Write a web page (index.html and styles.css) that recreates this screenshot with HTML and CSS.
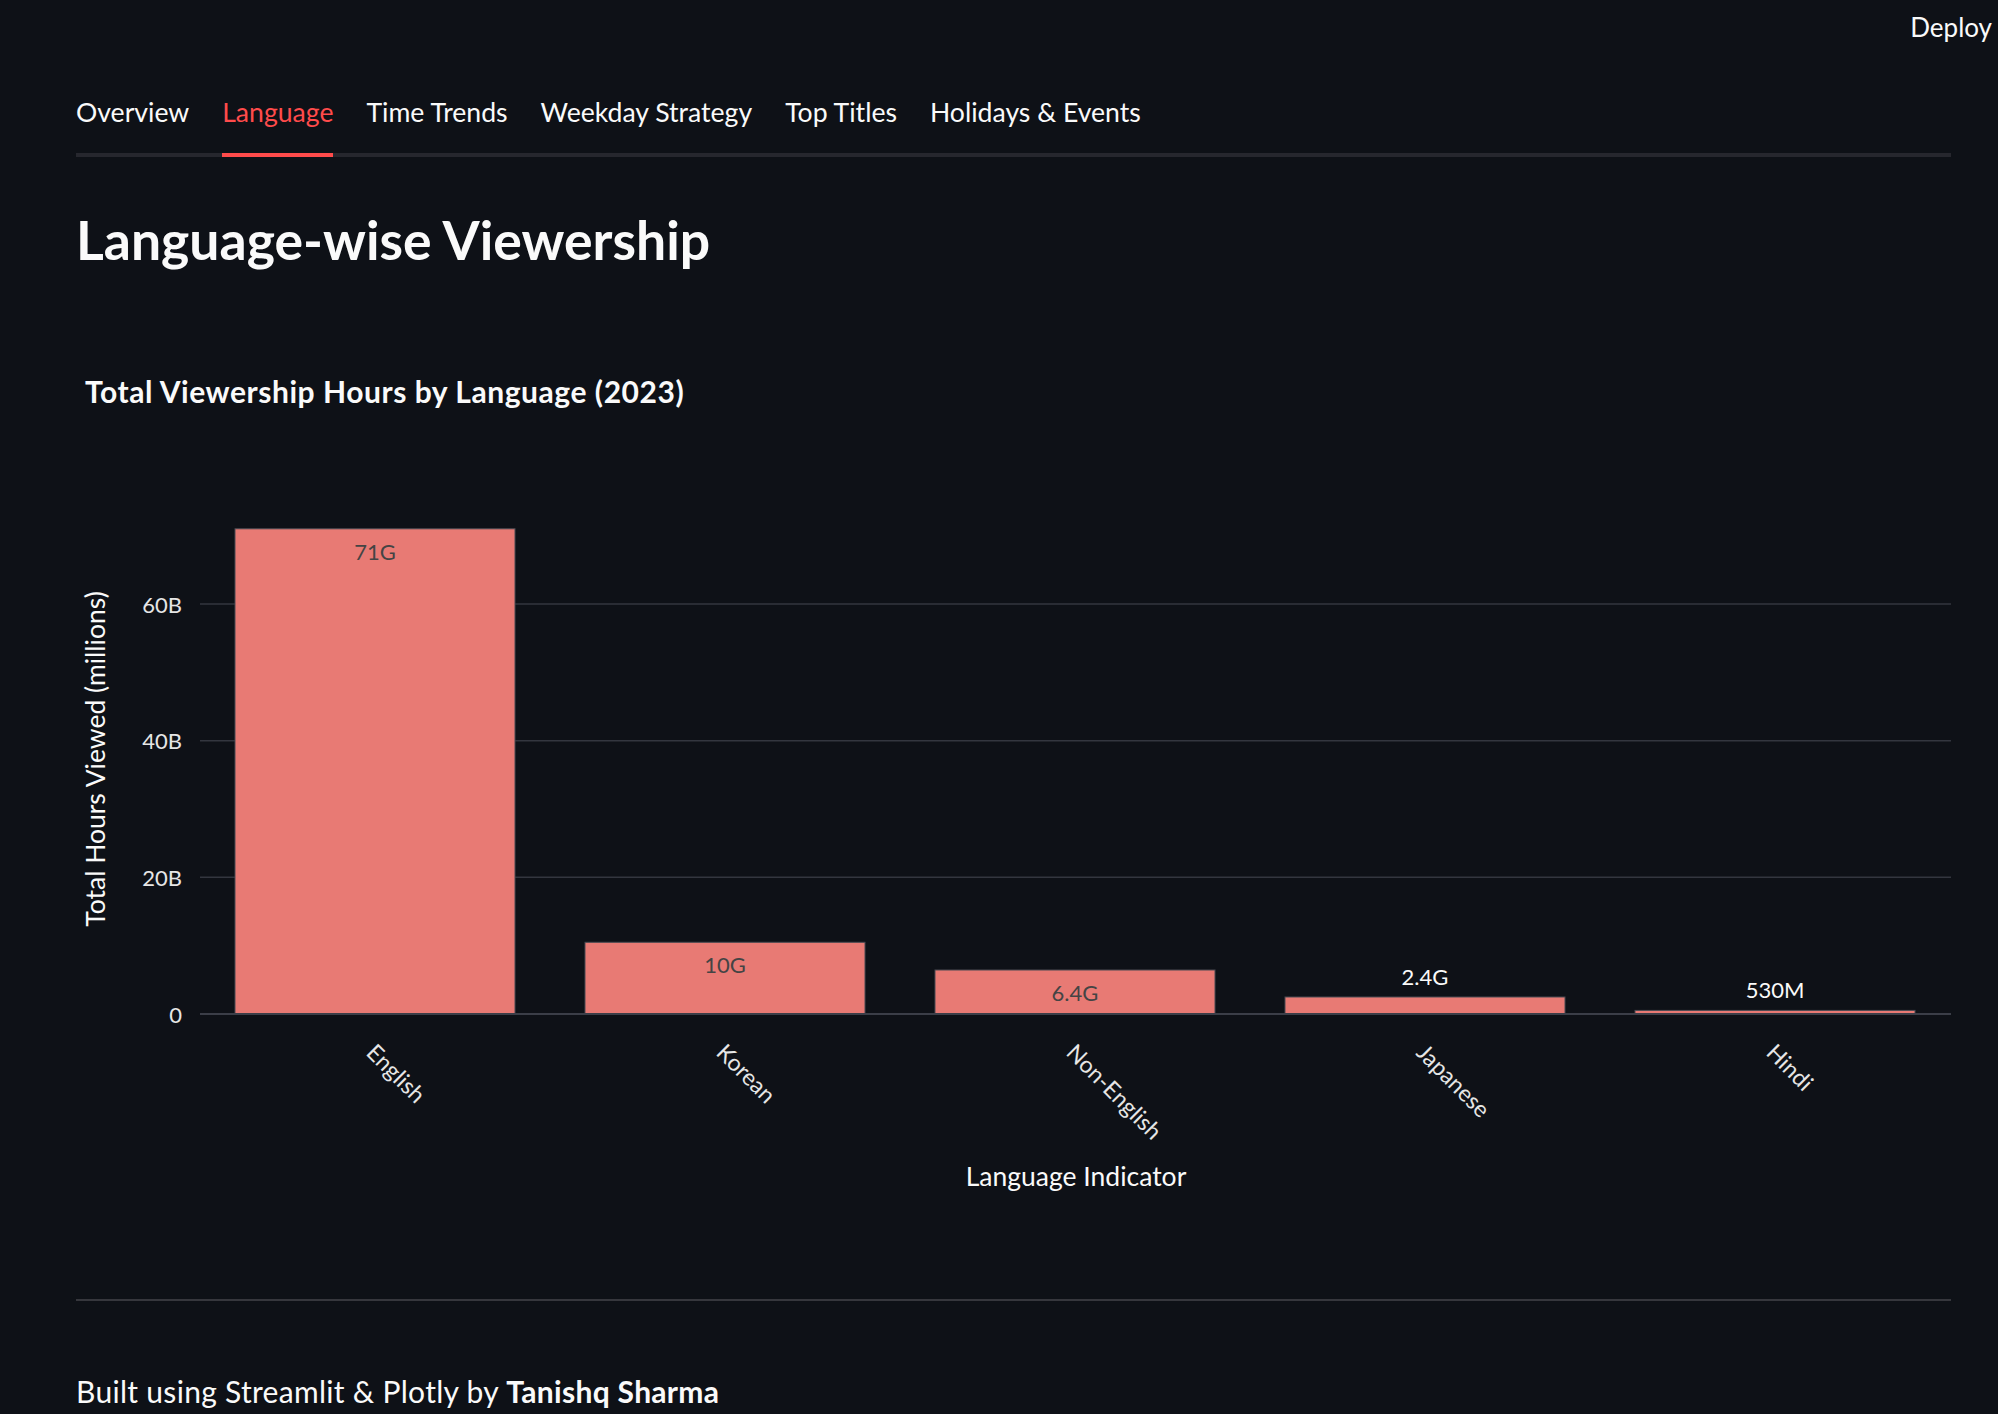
FILE: index.html
```html
<!DOCTYPE html>
<html lang="en">
<head>
<meta charset="utf-8">
<title>Language-wise Viewership</title>
<link rel="stylesheet" href="styles.css">
</head>
<body>
<header class="topbar">
  <span class="deploy">Deploy</span>
</header>
<main class="main">
  <nav class="tablist">
    <span class="tab">Overview</span>
    <span class="tab active">Language</span>
    <span class="tab">Time Trends</span>
    <span class="tab">Weekday Strategy</span>
    <span class="tab">Top Titles</span>
    <span class="tab">Holidays &amp; Events</span>
  </nav>
  <h1 class="page-title">Language-wise Viewership</h1>
  <svg class="chart" width="1875" height="900" viewBox="0 0 1875 900">
    <g transform="translate(-76,-340)">
      <text class="ctitle" x="85" y="403">Total Viewership Hours by Language (2023)</text>
      <line class="grid" x1="200" x2="1951" y1="604" y2="604"/>
      <line class="grid" x1="200" x2="1951" y1="740.7" y2="740.7"/>
      <line class="grid" x1="200" x2="1951" y1="877.3" y2="877.3"/>
      <text class="tick" x="182" y="612.5">60B</text>
      <text class="tick" x="182" y="749">40B</text>
      <text class="tick" x="182" y="886">20B</text>
      <text class="tick" x="182" y="1022.5">0</text>
      <rect class="bar" x="235" y="528.8" width="280" height="485.2"/>
      <rect class="bar" x="585" y="942.3" width="280" height="71.7"/>
      <rect class="bar" x="935" y="970" width="280" height="44"/>
      <rect class="bar" x="1285" y="997" width="280" height="17"/>
      <rect class="bar" x="1635" y="1010.4" width="280" height="3.6"/>
      <line class="zero" x1="200" x2="1951" y1="1014" y2="1014"/>
      <text class="val in" x="375" y="560">71G</text>
      <text class="val in" x="725" y="973">10G</text>
      <text class="val in" x="1075" y="1000.5">6.4G</text>
      <text class="val out" x="1425" y="985">2.4G</text>
      <text class="val out" x="1775" y="997.5">530M</text>
      <text class="cat" transform="translate(365,1054) rotate(45)">English</text>
      <text class="cat" transform="translate(715,1054) rotate(45)">Korean</text>
      <text class="cat" transform="translate(1065,1054) rotate(45)">Non-English</text>
      <text class="cat" transform="translate(1415,1054) rotate(45)">Japanese</text>
      <text class="cat" transform="translate(1765,1054) rotate(45)">Hindi</text>
      <text class="axtitle" transform="translate(105,759) rotate(-90)">Total Hours Viewed (millions)</text>
      <text class="axtitle" x="1076" y="1186">Language Indicator</text>
    </g>
  </svg>
  <hr class="divider">
  <p class="footer">Built using Streamlit &amp; Plotly by <strong>Tanishq Sharma</strong></p>
</main>
</body>
</html>
```
FILE: styles.css
```css
html, body {
  margin: 0;
  padding: 0;
  background: #0e1117;
}
body {
  color: #fafafa;
  font-family: Lato, "Liberation Sans", sans-serif;
  width: 1998px;
  height: 1414px;
  overflow: hidden;
}
.topbar {
  height: 94px;
  display: flex;
  justify-content: flex-end;
  align-items: flex-start;
  padding-top: 11px;
  padding-right: 6px;
  box-sizing: border-box;
}
.deploy {
  font-size: 26px;
  line-height: 32px;
  color: #fafafa;
}
.main {
  padding: 0 47px 0 76px;
}
.tablist {
  display: flex;
  gap: 33px;
  border-bottom: 4px solid #26272e;
}
.tab {
  font-size: 26.6px;
  line-height: 37px;
  padding-bottom: 22px;
  margin-bottom: -4px;
  border-bottom: 4px solid transparent;
  color: #fafafa;
  white-space: nowrap;
}
.tab.active {
  color: #ff4b4b;
  border-bottom-color: #ff4b4b;
}
.page-title {
  margin: 50px 0 0 0;
  font-size: 53.5px;
  line-height: 64px;
  font-weight: 700;
  color: #fafafa;
}
.chart {
  display: block;
  margin-top: 69px;
  overflow: visible;
}
.ctitle {
  font-size: 30px;
  font-weight: 700;
  letter-spacing: 0.55px;
  fill: #fafafa;
}
.grid {
  stroke: #33363f;
  stroke-width: 1.5;
}
.zero {
  stroke: #3b3e48;
  stroke-width: 2;
}
.tick {
  font-size: 22px;
  fill: #e6e6e6;
  text-anchor: end;
}
.bar {
  fill: #e87a74;
  stroke: #4a4b53;
  stroke-width: 1;
}
.val {
  font-size: 22px;
  text-anchor: middle;
}
.val.in {
  fill: #444444;
}
.val.out {
  fill: #fafafa;
}
.cat {
  font-size: 23px;
  fill: #e6e6e6;
}
.axtitle {
  font-size: 26.5px;
  fill: #fafafa;
  text-anchor: middle;
}
.divider {
  margin: 59px 0 0 0;
  border: none;
  border-top: 2px solid #36373d;
  height: 0;
}
.footer {
  margin: 72px 0 0 0;
  font-size: 30px;
  line-height: 36px;
  letter-spacing: 0.3px;
  color: #fafafa;
}
.footer strong {
  font-weight: 700;
}
```
